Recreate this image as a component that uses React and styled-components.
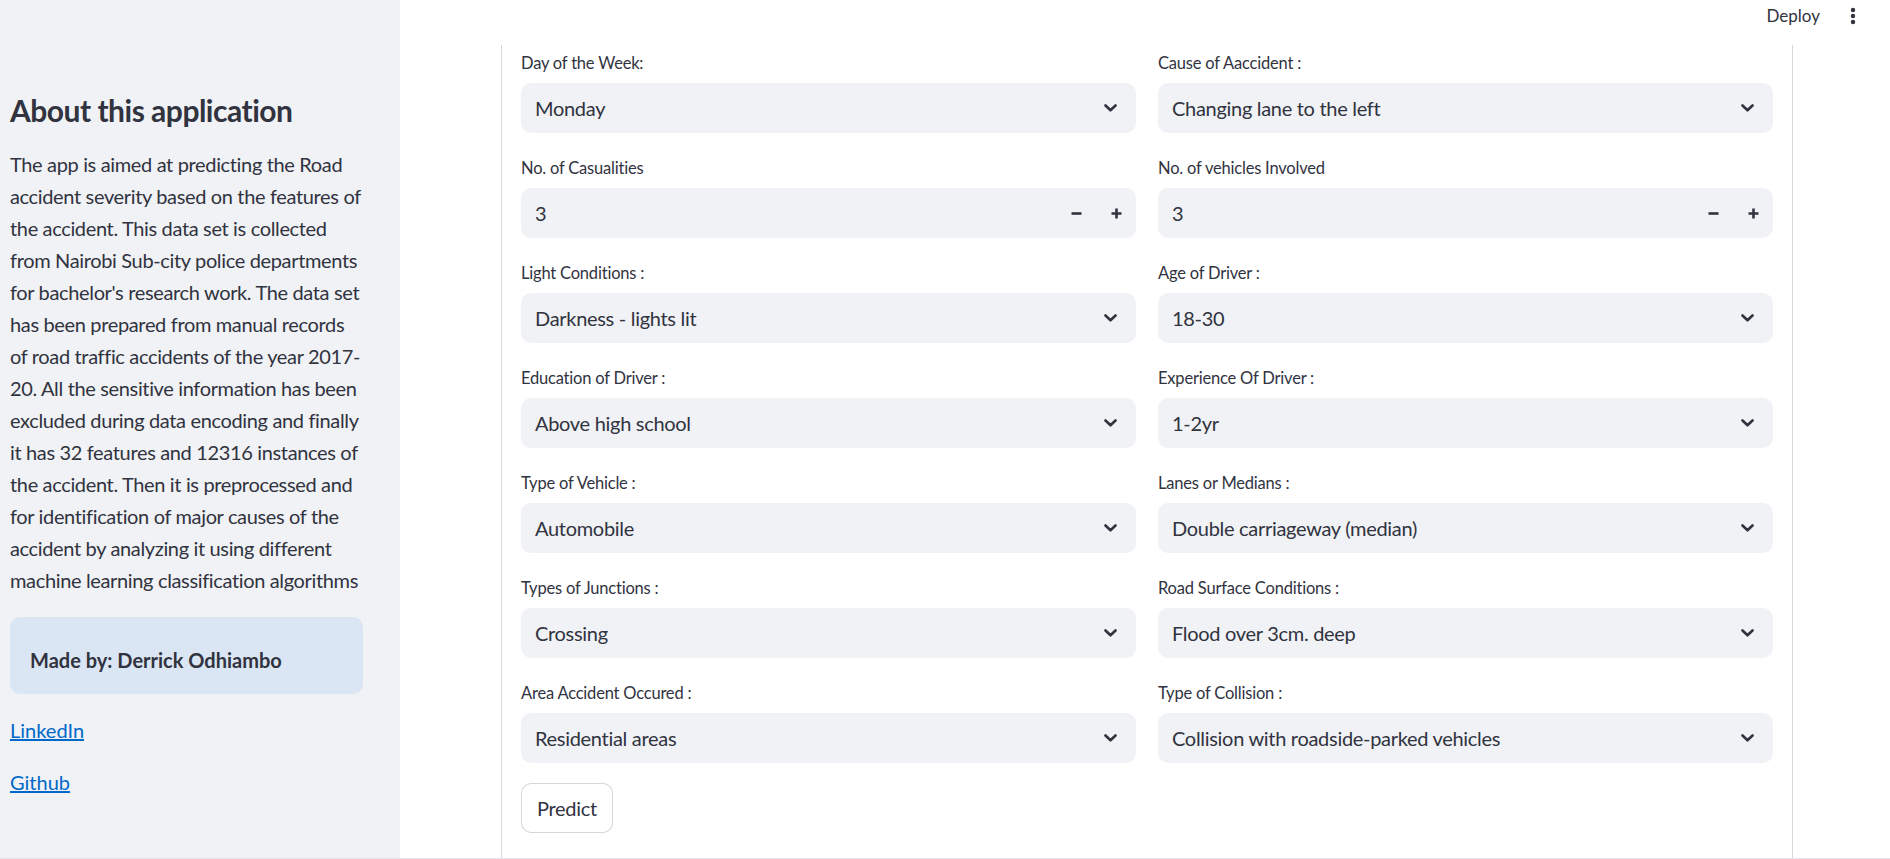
import styled, { createGlobalStyle } from 'styled-components';

const GlobalStyle = createGlobalStyle`
  html, body { margin: 0; padding: 0; }
  body {
    font-family: Lato, "Open Sans", sans-serif;
    color: #31333f;
    background: #ffffff;
  }
  * { box-sizing: border-box; }
`;

const Page = styled.div`
  display: flex;
  height: 100vh;
  overflow: hidden;
  border-bottom: 1px solid #e4e4e8;
`;

const Sidebar = styled.aside`
  width: 400px;
  flex-shrink: 0;
  background: #f0f2f6;
  padding: 92px 37px 0 10px;
`;

const SideTitle = styled.h2`
  margin: 0 0 19px;
  font-size: 30px;
  line-height: 37px;
  font-weight: 700;
  letter-spacing: -0.5px;
`;

const About = styled.p`
  margin: 0;
  font-size: 20px;
  line-height: 32px;
  letter-spacing: -0.35px;
`;

const Line = styled.span`
  display: block;
  white-space: nowrap;
`;

const MadeBy = styled.div`
  margin-top: 21px;
  padding: 27px 20px 18px;
  border-radius: 10px;
  background: #dbe6f4;
  font-size: 20px;
  line-height: 32px;
  font-weight: 700;
  color: #31333f;
`;

const LinkRow = styled.p`
  margin: 20px 0 0;
  font-size: 20px;
  line-height: 32px;
`;

const Link = styled.a`
  color: #0068c9;
  text-decoration: underline;
`;

const Main = styled.main`
  flex: 1;
  display: flex;
  flex-direction: column;
  min-width: 0;
`;

const Header = styled.header`
  height: 45px;
  flex-shrink: 0;
  display: flex;
  align-items: flex-start;
  justify-content: flex-end;
  gap: 30px;
  padding: 4px 34px 0 0;
`;

const Deploy = styled.span`
  font-size: 17px;
  line-height: 24px;
  color: #31333f;
`;

const MenuButton = styled.span`
  display: flex;
  align-items: center;
  height: 24px;
`;

const Form = styled.section`
  flex: 1;
  margin: 0 97px 0 101px;
  border-left: 1px solid #d6d6da;
  border-right: 1px solid #d6d6da;
  padding: 3px 19px 0;
`;

const Grid = styled.div`
  display: grid;
  grid-template-columns: 1fr 1fr;
  column-gap: 22px;
  row-gap: 20px;
`;

const Field = styled.div`
  display: flex;
  flex-direction: column;
`;

const Label = styled.label`
  height: 30px;
  margin-bottom: 5px;
  display: flex;
  align-items: center;
  font-size: 16.5px;
  letter-spacing: -0.2px;
  color: #31333f;
`;

const Control = styled.div`
  height: 50px;
  border-radius: 10px;
  background: #f0f2f6;
  display: flex;
  align-items: center;
  padding-left: 14px;
  padding-right: ${({ $number }) => ($number ? '0' : '19px')};
  font-size: 20px;
  color: #31333f;
`;

const Value = styled.span`
  flex: 1;
  letter-spacing: -0.3px;
  white-space: nowrap;
`;

const StepButton = styled.span`
  width: 40px;
  height: 100%;
  display: flex;
  align-items: center;
  justify-content: center;
`;

const Button = styled.button`
  margin-top: 20px;
  height: 50px;
  padding: 0 15px;
  border-radius: 10px;
  border: 1px solid rgba(49, 51, 63, 0.2);
  background: #ffffff;
  font-family: inherit;
  font-size: 20px;
  letter-spacing: -0.3px;
  color: #31333f;
`;

const Chevron = () => (
  <svg width="13" height="8" viewBox="0 0 13 8">
    <path d="M1.5 1.5 L6.5 6.3 L11.5 1.5" fill="none" stroke="#31333f" strokeWidth="2.6" strokeLinecap="round" strokeLinejoin="round" />
  </svg>
);

const Minus = () => (
  <svg width="11" height="11" viewBox="0 0 11 11">
    <path d="M0.5 5.5 H10.5" stroke="#31333f" strokeWidth="2.6" />
  </svg>
);

const Plus = () => (
  <svg width="11" height="11" viewBox="0 0 11 11">
    <path d="M0.5 5.5 H10.5 M5.5 0.5 V10.5" stroke="#31333f" strokeWidth="2.6" />
  </svg>
);

const Dots = () => (
  <svg width="6" height="18" viewBox="0 0 6 18">
    <circle cx="3" cy="3" r="2.2" fill="#31333f" />
    <circle cx="3" cy="9" r="2.2" fill="#31333f" />
    <circle cx="3" cy="15" r="2.2" fill="#31333f" />
  </svg>
);

const aboutLines = [
  'The app is aimed at predicting the Road',
  'accident severity based on the features of',
  'the accident. This data set is collected',
  'from Nairobi Sub-city police departments',
  "for bachelor's research work. The data set",
  'has been prepared from manual records',
  'of road traffic accidents of the year 2017-',
  '20. All the sensitive information has been',
  'excluded during data encoding and finally',
  'it has 32 features and 12316 instances of',
  'the accident. Then it is preprocessed and',
  'for identification of major causes of the',
  'accident by analyzing it using different',
  'machine learning classification algorithms',
];

const fields = [
  { label: 'Day of the Week:', value: 'Monday' },
  { label: 'Cause of Aaccident :', value: 'Changing lane to the left' },
  { label: 'No. of Casualities', value: '3', number: true },
  { label: 'No. of vehicles Involved', value: '3', number: true },
  { label: 'Light Conditions :', value: 'Darkness - lights lit' },
  { label: 'Age of Driver :', value: '18-30' },
  { label: 'Education of Driver :', value: 'Above high school' },
  { label: 'Experience Of Driver :', value: '1-2yr' },
  { label: 'Type of Vehicle :', value: 'Automobile' },
  { label: 'Lanes or Medians :', value: 'Double carriageway (median)' },
  { label: 'Types of Junctions :', value: 'Crossing' },
  { label: 'Road Surface Conditions :', value: 'Flood over 3cm. deep' },
  { label: 'Area Accident Occured :', value: 'Residential areas' },
  { label: 'Type of Collision :', value: 'Collision with roadside-parked vehicles' },
];

export default function App() {
  return (
    <>
      <GlobalStyle />
      <Page>
        <Sidebar>
          <SideTitle>About this application</SideTitle>
          <About>
            {aboutLines.map((l) => (
              <Line key={l}>{l}</Line>
            ))}
          </About>
          <MadeBy>Made by: Derrick Odhiambo</MadeBy>
          <LinkRow><Link href="#">LinkedIn</Link></LinkRow>
          <LinkRow><Link href="#">Github</Link></LinkRow>
        </Sidebar>
        <Main>
          <Header>
            <Deploy>Deploy</Deploy>
            <MenuButton><Dots /></MenuButton>
          </Header>
          <Form>
            <Grid>
              {fields.map((f) => (
                <Field key={f.label}>
                  <Label>{f.label}</Label>
                  <Control $number={f.number}>
                    <Value>{f.value}</Value>
                    {f.number ? (
                      <>
                        <StepButton><Minus /></StepButton>
                        <StepButton><Plus /></StepButton>
                      </>
                    ) : (
                      <Chevron />
                    )}
                  </Control>
                </Field>
              ))}
            </Grid>
            <Button type="button">Predict</Button>
          </Form>
        </Main>
      </Page>
    </>
  );
}
